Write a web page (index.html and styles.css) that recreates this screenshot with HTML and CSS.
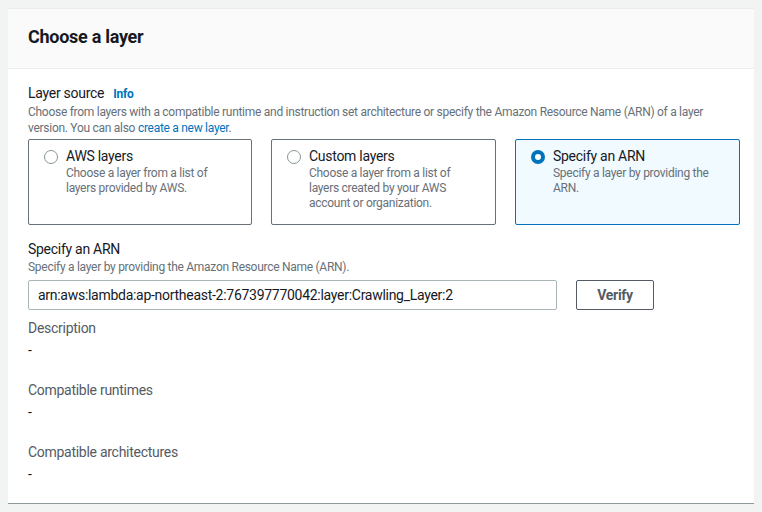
FILE: index.html
```html
<!DOCTYPE html>
<html>
<head>
<meta charset="utf-8">
<link rel="stylesheet" href="styles.css">
</head>
<body>
<div class="panel">
  <div class="panel-header">
    <h2 class="title">Choose a layer</h2>
  </div>
  <div class="panel-body">
    <div class="field">
      <div class="label">Layer source <a class="info">Info</a></div>
      <div class="desc">Choose from layers with a compatible runtime and instruction set architecture or specify the Amazon Resource Name (ARN) of a layer version. You can also <a class="link">create a new layer</a>.</div>
      <div class="tiles">
        <div class="tile">
          <span class="radio"></span>
          <div class="tile-text">
            <div class="tile-title">AWS layers</div>
            <div class="tile-desc">Choose a layer from a list of layers provided by AWS.</div>
          </div>
        </div>
        <div class="tile">
          <span class="radio"></span>
          <div class="tile-text">
            <div class="tile-title">Custom layers</div>
            <div class="tile-desc">Choose a layer from a list of layers created by your AWS account or organization.</div>
          </div>
        </div>
        <div class="tile selected">
          <span class="radio checked"></span>
          <div class="tile-text">
            <div class="tile-title">Specify an ARN</div>
            <div class="tile-desc">Specify a layer by providing the ARN.</div>
          </div>
        </div>
      </div>
    </div>

    <div class="field arn">
      <div class="label">Specify an ARN</div>
      <div class="desc">Specify a layer by providing the Amazon Resource Name (ARN).</div>
      <div class="arn-row">
        <div class="input">arn:aws:lambda:ap-northeast-2:767397770042:layer:Crawling_Layer:2</div>
        <button class="btn">Verify</button>
      </div>
    </div>

    <div class="kv">
      <div class="kv-label">Description</div>
      <div class="kv-value">-</div>
    </div>
    <div class="kv">
      <div class="kv-label">Compatible runtimes</div>
      <div class="kv-value">-</div>
    </div>
    <div class="kv">
      <div class="kv-label">Compatible architectures</div>
      <div class="kv-value">-</div>
    </div>
  </div>
</div>
</body>
</html>
```

FILE: styles.css
```css
html, body {
  background: #f2f3f3;
}
body {
  margin: 8px;
  font-family: Roboto, "Liberation Sans", Arial, sans-serif;
  color: #16191f;
  font-size: 14px;
  line-height: 20px;
  letter-spacing: -0.02em;
}
.panel {
  width: 751px;
  box-sizing: border-box;
  background: #fff;
  border-top: 1px solid #eaeded;
  border-bottom: 1px solid #8d9a9b;
  box-shadow: 1px 1px 1px 0 rgba(0, 28, 36, 0.12), -1px 1px 1px 0 rgba(0, 28, 36, 0.12);
}
.panel-header {
  background: #fafafa;
  border-bottom: 1px solid #eaeded;
  padding: 16px 20px 0 20px;
  height: 43px;
}
.title {
  margin: 0;
  font-size: 18px;
  line-height: 24px;
  font-weight: 700;
  color: #16191f;
}
.panel-body {
  padding: 14px 20px 19px 20px;
}
.label {
  font-size: 14px;
  line-height: 20px;
  color: #16191f;
}
.info {
  font-size: 12px;
  font-weight: 700;
  color: #0073bb;
  margin-left: 6px;
}
.desc {
  font-size: 12px;
  line-height: 16px;
  color: #687078;
}
.link {
  color: #0073bb;
}
.tiles {
  display: grid;
  grid-template-columns: 224px 225px 225px;
  column-gap: 19px;
  margin-top: 3px;
}
.tile {
  display: flex;
  gap: 8px;
  border: 1px solid #687078;
  border-radius: 2px;
  padding: 6px 14px 12px 15px;
  height: 86px;
  box-sizing: border-box;
}
.tile.selected {
  border-color: #0073bb;
  background: #f1faff;
}
.radio {
  flex: none;
  width: 14px;
  height: 14px;
  box-sizing: border-box;
  border: 1.5px solid #879596;
  border-radius: 50%;
  background: #fff;
  margin-top: 4px;
}
.radio.checked {
  border: 4px solid #0073bb;
}
.tile-title {
  font-size: 14px;
  line-height: 20px;
  color: #16191f;
}
.tile-desc {
  font-size: 12px;
  line-height: 15px;
  color: #687078;
}
.arn {
  margin-top: 14px;
}
.arn-row {
  display: flex;
  gap: 19px;
  margin-top: 5px;
}
.input {
  width: 529px;
  height: 30px;
  box-sizing: border-box;
  border: 1px solid #aab7b8;
  border-radius: 2px;
  padding: 4px 9px;
  font-size: 14px;
  line-height: 20px;
  color: #16191f;
}
.btn {
  width: 78px;
  height: 30px;
  box-sizing: border-box;
  border: 1px solid #545b64;
  border-radius: 2px;
  background: #fff;
  font-family: inherit;
  letter-spacing: inherit;
  font-size: 14px;
  font-weight: 700;
  color: #545b64;
  padding: 0;
}
.kv {
  margin-top: 8px;
}
.kv + .kv {
  margin-top: 20px;
}
.kv-label {
  font-size: 14px;
  line-height: 20px;
  color: #545b64;
}
.kv-value {
  margin-top: 2px;
  font-size: 14px;
  line-height: 20px;
  color: #16191f;
}
```
